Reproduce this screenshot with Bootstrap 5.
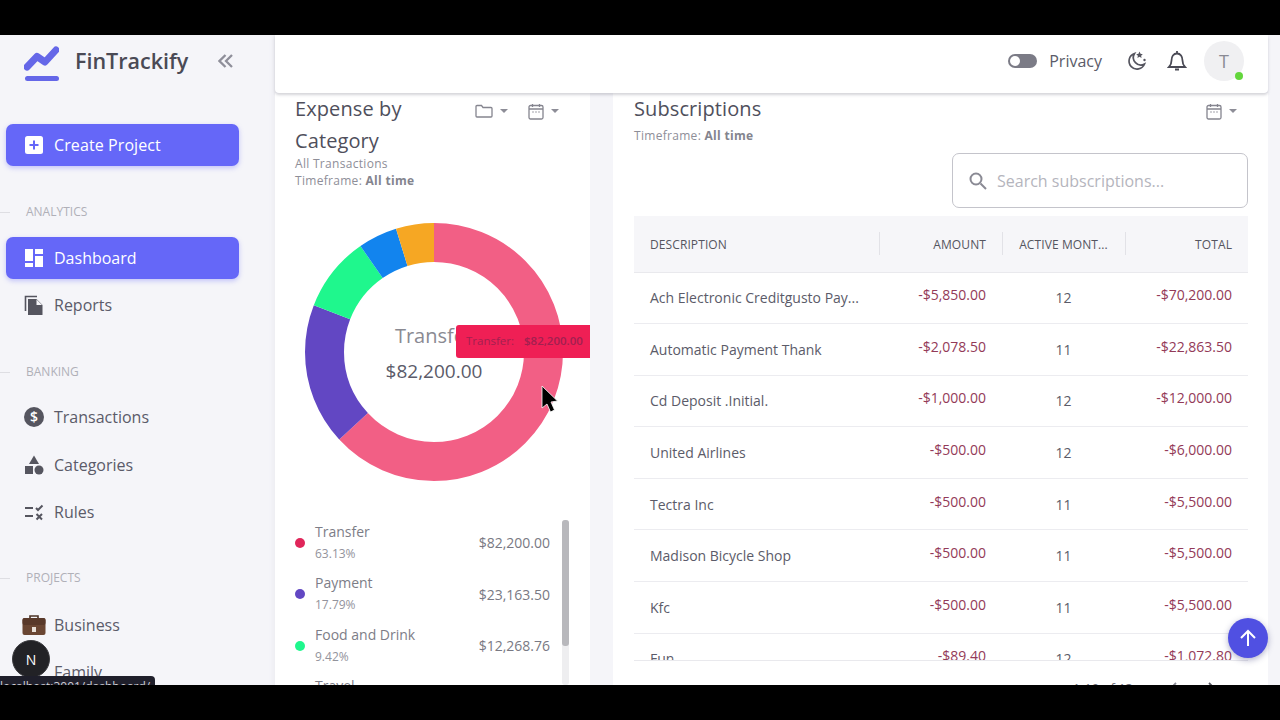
<!DOCTYPE html>
<html lang="en">
<head>
<meta charset="utf-8">
<title>FinTrackify</title>
<link href="https://cdn.jsdelivr.net/npm/bootstrap@5.3.0/dist/css/bootstrap.min.css" rel="stylesheet">
<style>
html,body{height:720px;overflow:hidden;background:#000;}
body{font-family:"Open Sans","Liberation Sans",sans-serif;color:#5b5b69;}
.blackbar{height:35px;background:#000;}
.appshell{height:650px;position:relative;overflow:hidden;background:#f5f5f9;}
.sidepane{width:275px;flex:none;background:#f5f5f9;box-shadow:inset -4px 0 4px -2px #ececf1;}
.brandrow{height:52px;padding:5px 0 0 24px;}
.brandname{font-size:21.5px;font-weight:600;color:#4a4a55;margin:0 0 6px 16px;line-height:30px;width:118px;}
.collapser{margin:0 0 6px 25px;}
.sideitem{display:flex;align-items:center;height:42px;margin:0 36px 0 6px;padding-left:18px;border-radius:7px;font-size:16px;color:#5b5b69;text-decoration:none;}
.sideitem svg,.sideitem .icobox{width:20px;height:20px;flex:none;margin-right:10px;}
.activeitem{background:#6567f8;color:#fff;box-shadow:0 2px 5px rgba(101,103,248,.35);}
.createbtn{margin-top:37px;letter-spacing:.1px;}
.seclabel{display:flex;align-items:center;font-size:12px;color:#b0b0b8;line-height:16px;}
.seclabel::before{content:"";width:10px;height:1px;background:#dedee3;margin-right:16px;}
.gapa{margin-top:38px;margin-bottom:17px;}
.gapb{margin-top:35.5px;margin-bottom:13.5px;}
.gapc{margin-top:34px;margin-bottom:15px;}
.plainitem{height:47.5px;}
.reportitem{margin-top:2px;}
.mainpane{width:993px;flex:none;}
.topstrip{height:58px;background:#fff;box-shadow:0 2px 3px rgba(60,60,80,.22);position:relative;z-index:2;padding:0 24px 6px 0;border-radius:0 0 4px 4px;flex:none;}
.privlabel{font-size:16px;color:#5b5b69;margin:0 23px 0 12px;}
.toggler{width:29px;height:14px;border-radius:7px;background:#7b7b86;position:relative;}
.toggler::after{content:"";position:absolute;left:2px;top:2px;width:10px;height:10px;border-radius:50%;background:#fff;}
.bellico{margin-left:20px;}
.avatarbox{width:40px;height:40px;border-radius:50%;background:#f0f0f2;color:#8a8a94;font-size:18px;position:relative;margin-left:17px;}
.onlinedot{position:absolute;right:1px;bottom:1px;width:8px;height:8px;border-radius:50%;background:#63d63c;}
.cardrow{height:592px;gap:23px;}
.leftpanel{width:315px;flex:none;background:#fff;overflow:hidden;position:relative;}
.rightpanel{width:655px;flex:none;background:#fff;overflow:hidden;padding:0 20px 0 21px;}
.paneltitle{font-size:20px;line-height:32px;font-weight:400;color:#4f4f5c;margin:0;letter-spacing:.1px;}
.lefthead{padding:0 20px;}
.subline{font-size:12px;line-height:17px;color:#8e8e98;letter-spacing:.3px;}
.subline b{font-weight:700;color:#84848e;}
.overlap{margin-top:-2px;}
.timeline{margin-top:2px;}
.dropico{height:20px;}
.caretmark{width:0;height:0;border-left:4px solid transparent;border-right:4px solid transparent;border-top:4px solid #8d8d97;margin-left:7px;}
.lefticons{margin:8px 11px 0 0;}
.righticons{margin:8px 11px 0 0;}
.calico{margin-left:20px;}
.donutbox{width:260px;height:260px;margin:33px 0 0 29px;position:relative;}
.donutcap{position:absolute;left:0;right:0;text-align:center;}
.capone{top:102px;font-size:20px;line-height:24px;color:#8a8a92;}
.captwo{top:137px;font-size:19px;line-height:24px;color:#5b5b69;}
.tiptag{position:absolute;left:152px;top:103px;width:140px;height:33px;background:#ef1f55;border-radius:3px;color:#a22050;font-size:11.5px;line-height:31px;padding-left:10px;white-space:nowrap;}
.tiptag b{font-weight:600;margin-left:7px;}
.legendwrap{margin-top:38px;padding-left:20px;height:165px;}
.legendlist{width:255px;flex:none;margin:-3px 12px 0 0;overflow:hidden;}
.legendrow{height:51.5px;display:flex;align-items:center;}
.legdot{width:10px;height:10px;border-radius:50%;flex:none;margin-right:10px;}
.legname{font-size:14px;line-height:22px;color:#7d7d87;}
.legpct{font-size:12px;line-height:22px;color:#93939c;}
.legamt{font-size:14px;color:#797983;margin-left:auto;}
.scrolltrack{width:7px;background:#eeeef0;border-radius:3px;}
.scrollthumb{height:126px;background:#b8b8bc;border-radius:3px;}
.searchrow{margin-top:9px;height:56px;}
.searchbox{width:296px;height:55px;border:1px solid #c4c4cb;border-radius:7px;padding-left:15px;}
.searchfield{border:0;outline:0;font-size:16px;padding:0;margin-left:9px;width:240px;background:transparent;color:#5b5b69;}
.searchfield::placeholder{color:#b5b5bd;opacity:1;}
.tablewrap{margin-top:7px;height:445px;overflow:hidden;border-bottom:1px solid #e9e9ed;}
.subtable{table-layout:fixed;width:614px;margin:0;font-size:14px;color:#5b5b69;}
.subtable th{background:#f6f6f9;height:56px;font-size:12px;font-weight:500;color:#55555f;padding:2px 16px 0;vertical-align:middle;position:relative;border-bottom:1px solid #e9e9ed;white-space:nowrap;text-transform:uppercase;letter-spacing:.1px;}
.subtable th+th::before{content:"";position:absolute;left:0;top:16px;height:23px;width:1px;background:#e2e2e7;}
.subtable td{height:51.6px;padding:0 16px;vertical-align:middle;border-bottom:1px solid #ececf0;white-space:nowrap;color:#5b5b69;}
.subtable td.moneycell{color:#933a58;padding-bottom:6px;}
.pagerrow{height:40px;font-size:13px;color:#6d6d78;padding-top:16px;padding-right:31px;}
.pagertext{margin-right:35px;}
.pagernext{margin-left:29px;}
.uptop{position:absolute;left:1228px;top:583px;width:40px;height:40px;border-radius:50%;background:#5050e2;box-shadow:0 2px 6px rgba(60,60,120,.4);z-index:4;}
.nextbadge{position:absolute;left:12px;top:605px;width:38px;height:38px;border-radius:50%;background:#222226;color:#fff;font-size:14px;z-index:5;border:1px solid #3a3a3e;}
.statusbar{position:absolute;left:0;top:641px;width:155px;height:12px;background:#1f1f2b;border-radius:0 4px 0 0;color:#cfcfd6;font-size:12px;line-height:22px;overflow:hidden;white-space:nowrap;z-index:6;}
.arrowptr{position:absolute;left:540px;top:350px;z-index:5;}
</style>
</head>
<body>
<div class="blackbar"></div>
<div class="appshell d-flex">
  <aside class="sidepane">
    <div class="brandrow d-flex align-items-center">
      <svg width="35" height="36" viewBox="0 0 35 36"><path d="M3 21 L13 10.500 L21 16 L32 4" fill="none" stroke="#6567e8" stroke-width="7" stroke-linejoin="round" stroke-linecap="round"/><rect x="1" y="30" width="34" height="5" rx="2.500" fill="#6567e8"/></svg>
      <span class="brandname">FinTrackify</span>
      <svg class="collapser" width="16" height="14" viewBox="0 0 16 14"><path d="M7.500 1 L1.500 7 L7.500 13 M14 1 L8 7 L14 13" fill="none" stroke="#8f8f9a" stroke-width="2.300"/></svg>
    </div>
    <a href="#" class="sideitem activeitem createbtn">
      <svg viewBox="0 0 20 20"><rect x="1" y="1" width="18" height="18" rx="2.500" fill="#fff"/><path d="M10 5.500v9M5.500 10h9" stroke="#6567f8" stroke-width="2"/></svg>
      <span>Create Project</span>
    </a>
    <div class="seclabel gapa">ANALYTICS</div>
    <a href="#" class="sideitem activeitem">
      <svg viewBox="0 0 20 20" fill="#fff"><rect x="1" y="1" width="8" height="12"/><rect x="1" y="15" width="8" height="4"/><rect x="11" y="1" width="8" height="5"/><rect x="11" y="8" width="8" height="11"/></svg>
      <span>Dashboard</span>
    </a>
    <a href="#" class="sideitem plainitem reportitem">
      <svg viewBox="0 0 20 20"><path d="M1.500 16V1.500H13" fill="none" stroke="#55555f" stroke-width="1.600"/><path d="M4 4h8.500L18.500 10v9.500a1 1 0 0 1-1 1H5a1 1 0 0 1-1-1z" fill="#55555f"/><path d="M12.500 4.500v5.500h5.500" fill="#f5f5f9"/></svg>
      <span>Reports</span>
    </a>
    <div class="seclabel gapb">BANKING</div>
    <a href="#" class="sideitem plainitem">
      <svg viewBox="0 0 20 20"><circle cx="10" cy="10" r="10" fill="#55555f"/><text x="10" y="15" font-size="14" font-weight="600" text-anchor="middle" fill="#fff" font-family="Open Sans">$</text></svg>
      <span>Transactions</span>
    </a>
    <a href="#" class="sideitem plainitem">
      <svg viewBox="0 0 20 20" fill="#55555f"><path d="M10 0.500 L15 9 H5z"/><rect x="1" y="11" width="8" height="8"/><circle cx="15" cy="15" r="4.500"/></svg>
      <span>Categories</span>
    </a>
    <a href="#" class="sideitem plainitem">
      <svg viewBox="0 0 20 20"><path d="M1 6h8M1 14h8" stroke="#55555f" stroke-width="2"/><path d="M12 6 L14 8 L18.500 3.500M12.500 12 L18 17.500M18 12 L12.500 17.500" fill="none" stroke="#55555f" stroke-width="2"/></svg>
      <span>Rules</span>
    </a>
    <div class="seclabel gapc">PROJECTS</div>
    <a href="#" class="sideitem plainitem">
      <svg viewBox="0 0 24 22" style="margin-left:-2px;width:24px;height:22px;margin-right:8px"><path d="M8 4V2h8v2" fill="none" stroke="#4c3326" stroke-width="1.600"/><rect x="0.500" y="4" width="23" height="17" rx="2" fill="#6a4633"/><rect x="0.500" y="4" width="23" height="7" rx="2" fill="#59392a"/><rect x="10" y="13" width="4" height="5" fill="#e8e0d8"/></svg>
      <span>Business</span>
    </a>
    <a href="#" class="sideitem plainitem">
      <span class="icobox"></span>
      <span>Family</span>
    </a>
  </aside>
  <main class="mainpane d-flex flex-column">
    <header class="topstrip d-flex align-items-center justify-content-end">
      <div class="toggler"></div>
      <span class="privlabel">Privacy</span>
      <svg width="22" height="22" viewBox="0 0 22 22" fill="none"><path d="M9.500 3.500A8 8 0 1 0 19.500 14 A7.500 7.500 0 0 1 9.500 3.500z" stroke="#55555f" stroke-width="1.700"/><path d="M14.500 1.500l1 2.300 2.300.4-1.700 1.500.5 2.300-2.100-1.200-2.100 1.200.5-2.300-1.700-1.500 2.300-.4z" fill="#55555f"/><circle cx="19.500" cy="10" r="1.200" fill="#55555f"/></svg>
      <svg class="bellico" width="20" height="22" viewBox="0 0 20 22" fill="none" stroke="#4a4a55" stroke-width="1.800"><path d="M2 17h16c-1.500-1.500-2.500-3-2.500-6.500C15.500 6.500 13.500 3.500 10 3.500S4.500 6.500 4.500 10.500C4.500 14 3.500 15.500 2 17z"/><path d="M10 1v2.500M8 19.500h4"/></svg>
      <div class="avatarbox d-flex align-items-center justify-content-center">T<span class="onlinedot"></span></div>
    </header>
    <div class="cardrow d-flex">
      <section class="leftpanel">
        <div class="lefthead">
          <div class="d-flex justify-content-between">
            <h5 class="paneltitle" style="width:150px">Expense by Category</h5>
            <div class="d-flex align-items-center dropico lefticons">
              <svg width="18" height="14" viewBox="0 0 18 14" fill="none" stroke="#85858f" stroke-width="1.300"><path d="M1 2.500a1 1 0 0 1 1-1h4.500l1.500 2h8a1 1 0 0 1 1 1V12a1 1 0 0 1-1 1H2a1 1 0 0 1-1-1z"/></svg>
              <span class="caretmark"></span>
              <svg class="calico" width="16" height="17" viewBox="0 0 16 17" fill="none" stroke="#85858f" stroke-width="1.300"><rect x="1" y="2.500" width="14" height="13.500" rx="1.500"/><path d="M1 6h14M4.500 1v3M11.500 1v3M4.500 9h1M7.500 9h1M10.500 9h1"/></svg>
              <span class="caretmark"></span>
            </div>
          </div>
          <div class="subline overlap">All Transactions</div>
          <div class="subline">Timeframe: <b>All time</b></div>
        </div>
        <div class="donutbox">
          <svg width="260" height="260" viewBox="0 0 260 260">
            <g fill="none" stroke-width="39" transform="rotate(-90 130 130)">
              <circle cx="130" cy="130" r="109.500" pathLength="100" stroke="#f25f85" stroke-dasharray="63.130 100" stroke-dashoffset="0"/>
              <circle cx="130" cy="130" r="109.500" pathLength="100" stroke="#6247c3" stroke-dasharray="17.790 100" stroke-dashoffset="-63.130"/>
              <circle cx="130" cy="130" r="109.500" pathLength="100" stroke="#1ff78d" stroke-dasharray="9.420 100" stroke-dashoffset="-80.920"/>
              <circle cx="130" cy="130" r="109.500" pathLength="100" stroke="#1284ee" stroke-dasharray="4.900 100" stroke-dashoffset="-90.340"/>
              <circle cx="130" cy="130" r="109.500" pathLength="100" stroke="#f6a723" stroke-dasharray="4.760 100" stroke-dashoffset="-95.240"/>
            </g>
          </svg>
          <div class="donutcap capone">Transfer</div>
          <div class="donutcap captwo">$82,200.00</div>
          <div class="tiptag">Transfer: <b>$82,200.00</b></div>
        </div>
        <div class="legendwrap d-flex">
          <div class="legendlist">
            <div class="legendrow"><span class="legdot" style="background:#e0265a"></span><div><div class="legname">Transfer</div><div class="legpct">63.13%</div></div><span class="legamt">$82,200.00</span></div>
            <div class="legendrow"><span class="legdot" style="background:#6247c3"></span><div><div class="legname">Payment</div><div class="legpct">17.79%</div></div><span class="legamt">$23,163.50</span></div>
            <div class="legendrow"><span class="legdot" style="background:#1ff78d"></span><div><div class="legname">Food and Drink</div><div class="legpct">9.42%</div></div><span class="legamt">$12,268.76</span></div>
            <div class="legendrow"><span class="legdot" style="background:#1284ee"></span><div><div class="legname">Travel</div><div class="legpct">4.90%</div></div><span class="legamt"></span></div>
          </div>
          <div class="scrolltrack"><div class="scrollthumb"></div></div>
        </div>
      </section>
      <section class="rightpanel">
        <div class="d-flex justify-content-between align-items-start">
          <h5 class="paneltitle">Subscriptions</h5>
          <div class="d-flex align-items-center dropico righticons">
            <svg width="16" height="17" viewBox="0 0 16 17" fill="none" stroke="#85858f" stroke-width="1.300"><rect x="1" y="2.500" width="14" height="13.500" rx="1.500"/><path d="M1 6h14M4.500 1v3M11.500 1v3M4.500 9h1M7.500 9h1M10.500 9h1"/></svg>
            <span class="caretmark"></span>
          </div>
        </div>
        <div class="subline timeline">Timeframe: <b>All time</b></div>
        <div class="searchrow d-flex justify-content-end">
          <div class="searchbox d-flex align-items-center">
            <svg width="20" height="20" viewBox="0 0 20 20" fill="none" stroke="#8a8a94" stroke-width="2"><circle cx="8" cy="8" r="5.500"/><path d="M12.500 12.500 L18 18"/></svg>
            <input class="searchfield" type="text" placeholder="Search subscriptions...">
          </div>
        </div>
        <div class="tablewrap">
          <table class="table subtable">
            <colgroup><col style="width:245px"><col style="width:123px"><col style="width:123px"><col style="width:123px"></colgroup>
            <thead><tr><th>Description</th><th class="text-end">Amount</th><th class="text-center">Active Mont...</th><th class="text-end">Total</th></tr></thead>
            <tbody>
              <tr><td>Ach Electronic Creditgusto Pay...</td><td class="moneycell text-end">-$5,850.00</td><td class="text-center">12</td><td class="moneycell text-end">-$70,200.00</td></tr>
              <tr><td>Automatic Payment Thank</td><td class="moneycell text-end">-$2,078.50</td><td class="text-center">11</td><td class="moneycell text-end">-$22,863.50</td></tr>
              <tr><td>Cd Deposit .Initial.</td><td class="moneycell text-end">-$1,000.00</td><td class="text-center">12</td><td class="moneycell text-end">-$12,000.00</td></tr>
              <tr><td>United Airlines</td><td class="moneycell text-end">-$500.00</td><td class="text-center">12</td><td class="moneycell text-end">-$6,000.00</td></tr>
              <tr><td>Tectra Inc</td><td class="moneycell text-end">-$500.00</td><td class="text-center">11</td><td class="moneycell text-end">-$5,500.00</td></tr>
              <tr><td>Madison Bicycle Shop</td><td class="moneycell text-end">-$500.00</td><td class="text-center">11</td><td class="moneycell text-end">-$5,500.00</td></tr>
              <tr><td>Kfc</td><td class="moneycell text-end">-$500.00</td><td class="text-center">11</td><td class="moneycell text-end">-$5,500.00</td></tr>
              <tr><td>Fun</td><td class="moneycell text-end">-$89.40</td><td class="text-center">12</td><td class="moneycell text-end">-$1,072.80</td></tr>
            </tbody>
          </table>
        </div>
        <div class="pagerrow d-flex justify-content-end align-items-center">
          <span class="pagertext">1-10 of 13</span>
          <svg width="10" height="14" viewBox="0 0 10 14" fill="none" stroke="#8a8a94" stroke-width="1.800"><path d="M8 1 L2 7 L8 13"/></svg>
          <svg class="pagernext" width="10" height="14" viewBox="0 0 10 14" fill="none" stroke="#55555f" stroke-width="1.800"><path d="M2 1 L8 7 L2 13"/></svg>
        </div>
      </section>
    </div>
  </main>
  <button class="uptop btn p-0 d-flex align-items-center justify-content-center border-0" type="button" aria-label="Back to top">
    <svg width="20" height="20" viewBox="0 0 20 20" fill="none" stroke="#fff" stroke-width="2"><path d="M10 18V3M3 10 L10 3 L17 10"/></svg>
  </button>
  <div class="nextbadge d-flex align-items-center justify-content-center">N</div>
  <div class="statusbar">localhost:3001/dashboard/</div>
  <svg class="arrowptr" width="18" height="30" viewBox="0 0 18 30"><path d="M2 1 L2 23 L7 19 L10.500 27 L14.500 25 L11 17 L17.500 16z" fill="#000" stroke="#fff" stroke-width="0.800"/></svg>
</div>
<div class="blackbar"></div>
<script src="https://cdn.jsdelivr.net/npm/bootstrap@5.3.0/dist/js/bootstrap.bundle.min.js"></script>
</body>
</html>
